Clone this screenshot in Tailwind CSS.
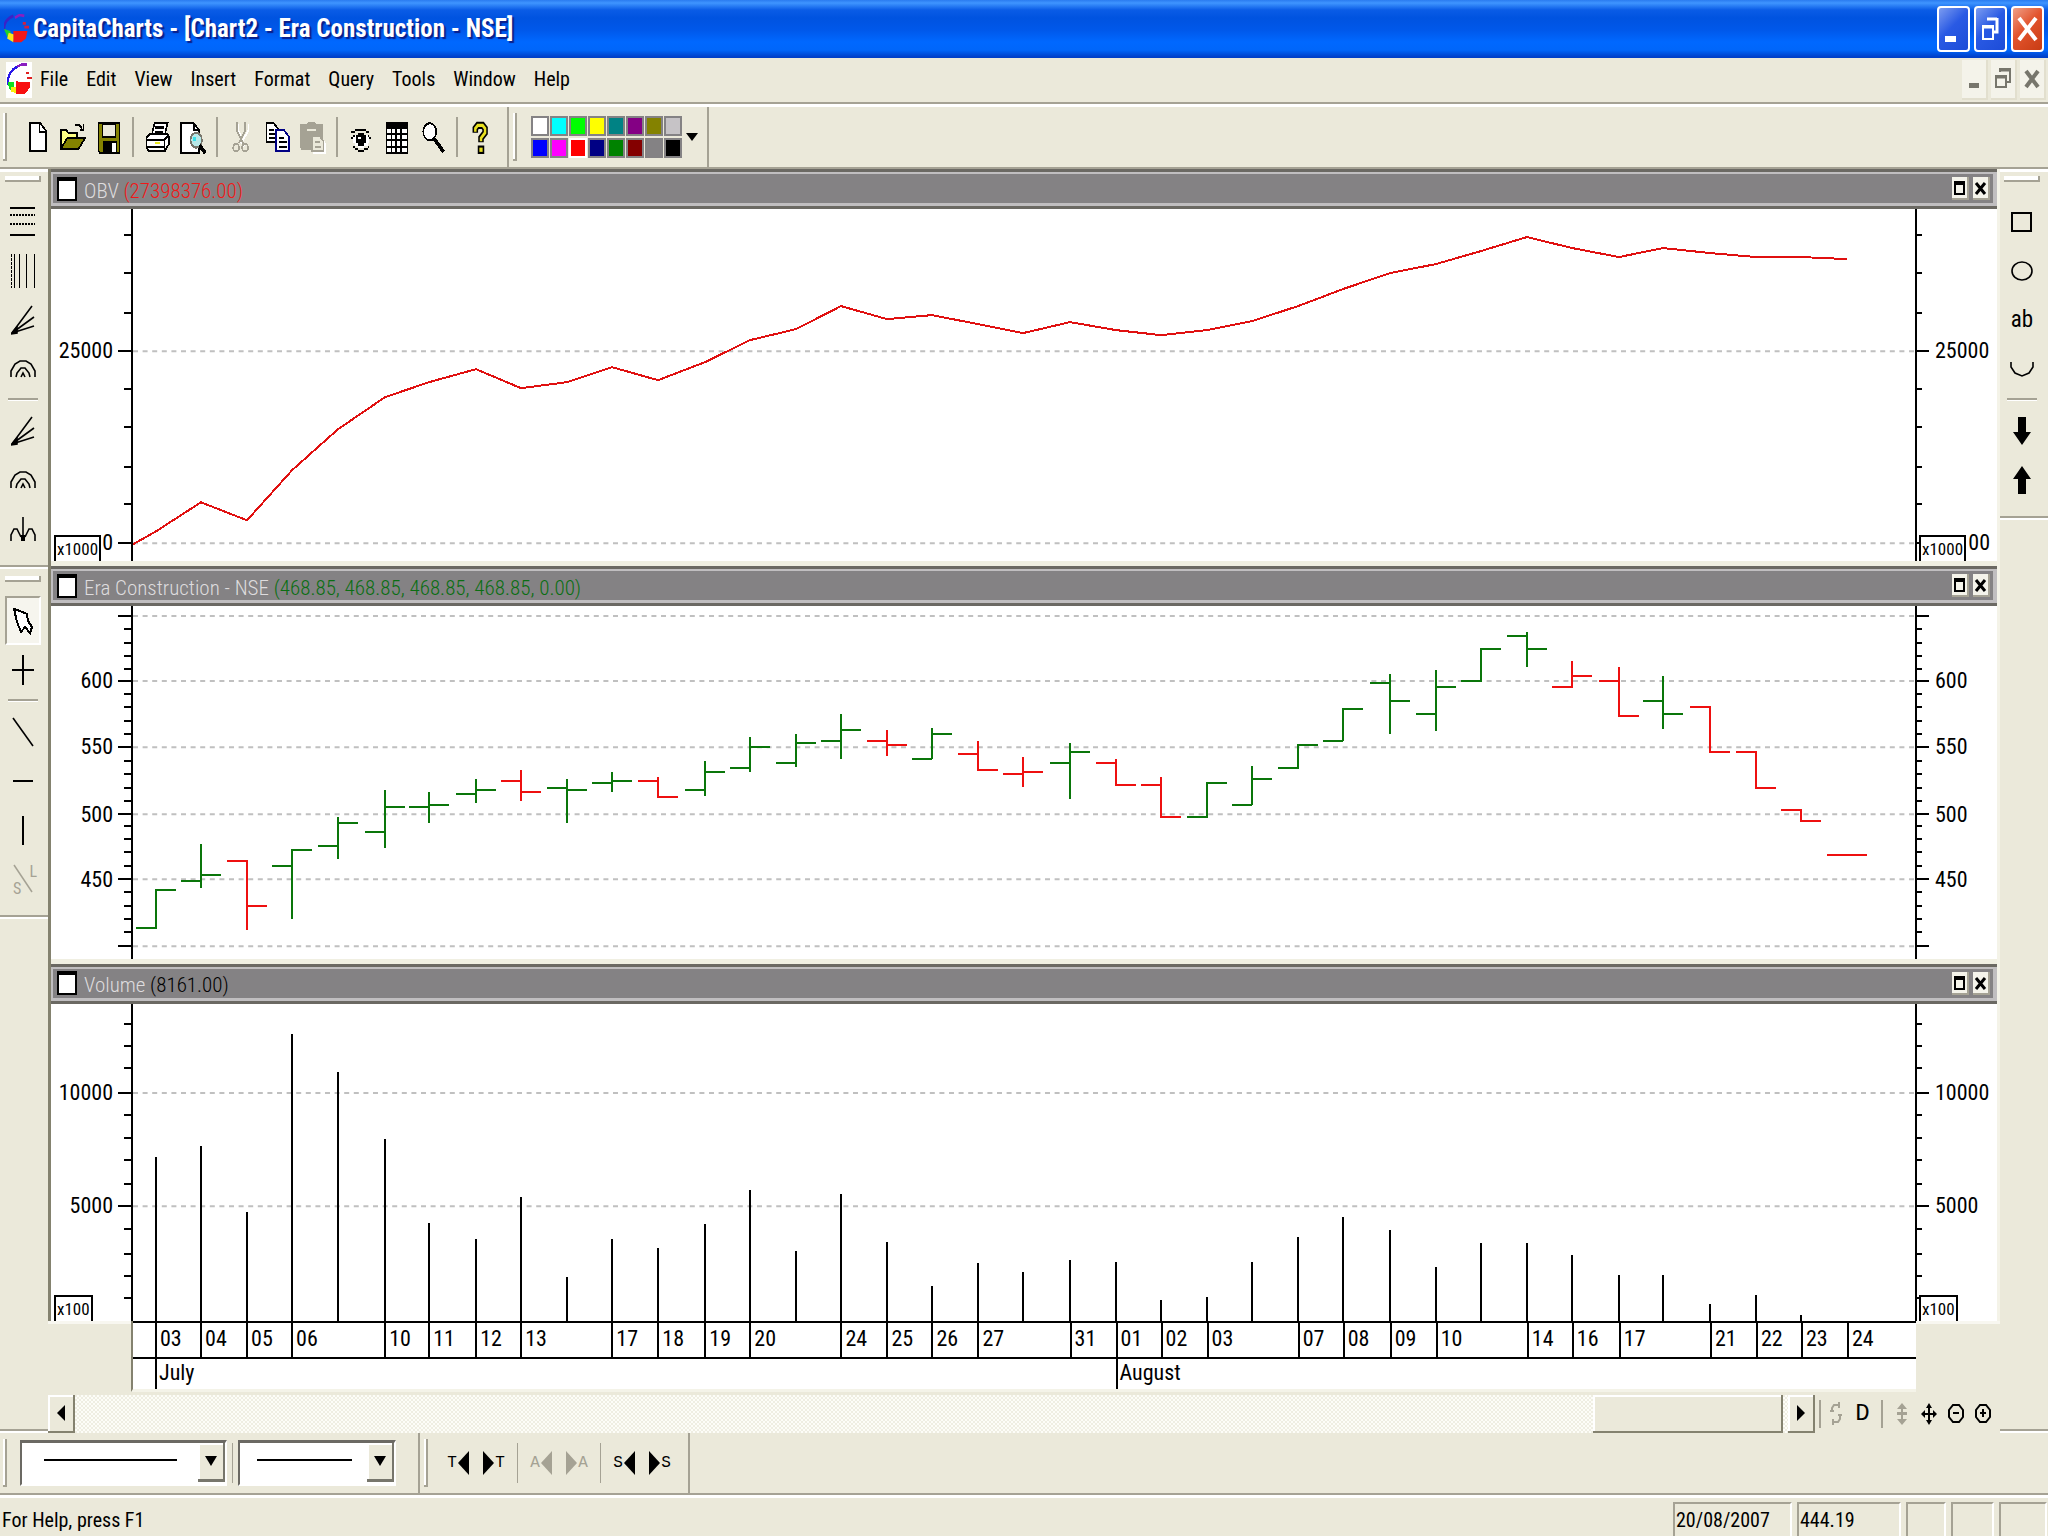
<!DOCTYPE html>
<html lang="en">
<head>
<meta charset="utf-8">
<title>CapitaCharts - [Chart2 - Era Construction - NSE]</title>
<script src="https://cdn.jsdelivr.net/npm/@tailwindcss/browser@4"></script>
</head>
<body class="flex min-h-screen flex-col overflow-x-hidden bg-[#ebe9da] font-['Roboto_Condensed','Roboto','Liberation_Sans',sans-serif] text-[20px] leading-6 text-black">

<!-- Title bar -->
<header class="flex h-[58px] shrink-0 items-center bg-[linear-gradient(to_bottom,#2a7bf0_0,#3f95ff_3px,#0a5ce6_10px,#0053e0_18px,#0058ea_30px,#0068ff_42px,#0066fa_50px,#003fc8_57px)] pr-1 pl-1">
  <svg class="h-[30px] w-[25px]" viewBox="0 0 16 16" preserveAspectRatio="none" aria-hidden="true"><path d="M0 8Q0 3 6 1" fill="none" stroke="#3a22c8" stroke-width="1.5"/><path d="M7 2L10 .5L13 1" fill="none" stroke="#8a1fc0" stroke-width="1.4"/><path d="M0 8L4 9L5 13L2 12Z" fill="#1fd02c"/><path d="M3 10L7 11L6 15L2 13Z" fill="#f5e81c"/><path d="M6 9L15 9L14 13L11 15L6 15Z" fill="#f01818"/><path d="M12 5H14M13 7H16" stroke="#d02040" stroke-width="1.4"/></svg>
  <h1 class="ml-1 flex-1 text-[25px] font-bold text-white [text-shadow:2px_2px_1px_#0a1e8a]">CapitaCharts - [Chart2 - Era Construction - NSE]</h1>
  <div class="flex gap-1">
    <button aria-label="Minimize" class="h-[46px] w-[33px] rounded-[4px] border-2 border-white bg-[linear-gradient(135deg,#7c9cf0,#2a5ae4_45%,#1c4cd8)]"><svg class="h-full w-full" viewBox="0 0 29 42"><path d="M6 28H17V34H6Z" fill="#fff"/></svg></button>
    <button aria-label="Restore" class="h-[46px] w-[33px] rounded-[4px] border-2 border-white bg-[linear-gradient(135deg,#7c9cf0,#2a5ae4_45%,#1c4cd8)]"><svg class="h-full w-full" viewBox="0 0 29 42" fill="none" stroke="#fff" stroke-width="2"><path d="M7 18H17V31H7Z"/><path d="M7 19H17M11 11H21M21 10V24H18" stroke-width="3"/></svg></button>
    <button aria-label="Close" class="h-[46px] w-[33px] rounded-[4px] border-2 border-white bg-[linear-gradient(135deg,#f0a088,#e2532c_45%,#c83c14)]"><svg class="h-full w-full" viewBox="0 0 29 42" fill="none" stroke="#fff" stroke-width="4"><path d="M6 10L23 32M23 10L6 32"/></svg></button>
  </div>
</header>

<!-- Menu bar -->
<div class="flex h-[49px] shrink-0 items-center border-b-[3px] border-white">
  <div class="flex h-full w-full items-center border-b-2 border-[#a5a294] pl-[6px]">
    <svg class="h-9 w-[26px] bg-white" viewBox="0 0 16 16" preserveAspectRatio="none" shape-rendering="crispEdges" aria-hidden="true"><path d="M1 10Q1 4 7 2" fill="none" stroke="#2a18e8" stroke-width="1.2"/><path d="M7 2L10 1H13" fill="none" stroke="#8a1fc0" stroke-width="1.2"/><path d="M1 9L5 9L5 13L2 12Z" fill="#10e020"/><path d="M3 11L7 11L6 14L3 13Z" fill="#f8ee10"/><path d="M6 8L8 9H15V11L12 14H6Z" fill="#f81010"/><path d="M12 5H14M13 7H16" stroke="#e02020"/></svg>
    <nav class="flex flex-1 gap-[18px] pb-[2px] pl-2">
      <button>File</button><button>Edit</button><button>View</button><button>Insert</button><button>Format</button><button>Query</button><button>Tools</button><button>Window</button><button>Help</button>
    </nav>
    <div class="flex gap-[3px] pr-[2px]">
      <button aria-label="Minimize chart" class="h-10 w-[26px] border-r-2 border-b-2 border-[#e2dfce] bg-[#f4f3ea]"><svg class="h-full w-full" viewBox="0 0 24 38"><path d="M7 23H17V28H7Z" fill="#77766c"/></svg></button>
      <button aria-label="Restore chart" class="h-10 w-[26px] border-r-2 border-b-2 border-[#e2dfce] bg-[#f4f3ea]"><svg class="h-full w-full" viewBox="0 0 24 38" fill="none" stroke="#77766c" stroke-width="2"><path d="M5 16H15V27H5ZM9 12V9H19V22H16"/><path d="M4 17H16M8 10H20" stroke-width="3"/></svg></button>
      <button aria-label="Close chart" class="h-10 w-[26px] border-r-2 border-b-2 border-[#e2dfce] bg-[#f4f3ea]"><svg class="h-full w-full" viewBox="0 0 24 38" fill="none" stroke="#77766c" stroke-width="4"><path d="M6 11L18 27M18 11L6 27"/></svg></button>
    </div>
  </div>
</div>

<!-- Standard toolbar -->
<div class="flex h-[62px] shrink-0 items-center border-b-2 border-[#a5a294]">
  <div class="flex h-full items-center border-r-2 border-[#a5a294] pr-2 pl-[3px]">
    <div class="mr-3 h-12 w-1 border-r-2 border-b-2 border-[#a5a294] bg-white"></div>
    <button aria-label="New" class="flex h-11 w-9 items-center justify-center"><svg class="h-[34px] w-[26px]" viewBox="0 0 16 16" preserveAspectRatio="none" shape-rendering="crispEdges"><path d="M3.5 1.5H10L13.5 5V14.5H3.5Z" fill="#fff" stroke="#000"/><path d="M9.5 1V5.5H14" fill="none" stroke="#000"/></svg></button>
    <button aria-label="Open" class="flex h-11 w-9 items-center justify-center"><svg class="h-[34px] w-[26px]" viewBox="0 0 16 16" preserveAspectRatio="none" shape-rendering="crispEdges"><path d="M.5 13V4.5H4L5 6H10.5V8" fill="#ffff84" stroke="#000"/><path d="M.5 13.5L4.5 8.5H15.5L11.5 13.5Z" fill="#848200" stroke="#000"/><path d="M9 2.5H12L13.5 4M14.5 2V5M12 4.5H15" fill="none" stroke="#000"/></svg></button>
    <button aria-label="Save" class="flex h-11 w-9 items-center justify-center"><svg class="h-[34px] w-[26px]" viewBox="0 0 16 16" preserveAspectRatio="none" shape-rendering="crispEdges"><path d="M1.5 1.5H14.5V15.5H2.5L1.5 14.5Z" fill="#848200" stroke="#000"/><path d="M4 2H12V8H4Z" fill="#ebe9da" stroke="#000"/><path d="M4 10H13V15H4Z"/><path d="M10 11H12V15H10Z" fill="#fff"/></svg></button>
    <div class="mx-[5px] h-10 w-[2px] bg-[#a5a294]"></div>
    <button aria-label="Print" class="flex h-11 w-9 items-center justify-center"><svg class="h-[34px] w-[26px]" viewBox="0 0 16 16" preserveAspectRatio="none" shape-rendering="crispEdges" fill="#fff" stroke="#000"><path d="M5 6.5L6.5 1.5H14.5L13 6.5"/><path d="M7 3.5H12M6.5 5.5H11.5"/><path d="M1.5 8.5L3.5 6.5H14.5L15.5 8V11L13 14.5H3L1.5 13Z"/><path d="M1 9.5H12.5L14.5 7.5M12.5 9.5V14M2 12.5H12"/><path d="M7 11H10" stroke="#e8e820"/></svg></button>
    <button aria-label="Print preview" class="flex h-11 w-9 items-center justify-center"><svg class="h-[34px] w-[26px]" viewBox="0 0 16 16" preserveAspectRatio="none" shape-rendering="crispEdges"><path d="M.5 1.5H8.5L11.5 4.5V15.5H.5Z" fill="#fff" stroke="#000"/><path d="M8.5 2V4.5H12" fill="none" stroke="#000"/><circle cx="10" cy="9.500" r="3.500" fill="#b8e8e8" stroke="#77766c"/><path d="M8 8H10V10H8Z" fill="#38e0e8"/><path d="M12 12L15.500 15.500" stroke="#000" stroke-width="2"/></svg></button>
    <div class="mx-[5px] h-10 w-[2px] bg-[#a5a294]"></div>
    <button aria-label="Cut" disabled class="flex h-11 w-9 items-center justify-center"><svg class="h-[34px] w-[26px]" viewBox="0 0 16 16" preserveAspectRatio="none" shape-rendering="crispEdges" fill="none"><path d="M6.5 2V5L8.500 9L10 12.500M12.500 2V5L9.500 9L8 11" stroke="#fff"/><path d="M5.500 1V5L8 9L9.500 11M10.500 1V5L8 9L6.500 11" stroke="#a5a294"/><circle cx="5" cy="13" r="1.800" stroke="#a5a294"/><circle cx="10.500" cy="13" r="1.800" stroke="#a5a294"/></svg></button>
    <button aria-label="Copy" class="flex h-11 w-9 items-center justify-center"><svg class="h-[34px] w-[26px]" viewBox="0 0 16 16" preserveAspectRatio="none" shape-rendering="crispEdges" fill="#fff"><path d="M1.500 1.500H6L8.500 4V10.500H1.500Z" stroke="#000"/><path d="M3 4.500H6M3 6.500H7M3 8.500H7" stroke="#000"/><path d="M7.500 4.500H12L15.500 8V14.500H7.500Z" stroke="#000084"/><path d="M9 8.500H12M9 10.500H14M9 12.500H14" stroke="#000"/></svg></button>
    <button aria-label="Paste" disabled class="flex h-11 w-9 items-center justify-center"><svg class="h-[34px] w-[26px]" viewBox="0 0 16 16" preserveAspectRatio="none" shape-rendering="crispEdges"><path d="M0 2H4L5 1H9L10 2H14V14H1L0 13Z" fill="#a5a294"/><path d="M4 4H10V5H4Z" fill="#ebe9da"/><path d="M8 8H13L16 11V16H8Z" fill="#fff"/><path d="M7.500 7.500H12L14.500 10V14.500H7.500Z" fill="#ebe9da" stroke="#a5a294"/><path d="M9 10.500H12M9 12.500H13" stroke="#a5a294"/></svg></button>
    <div class="mx-[5px] h-10 w-[2px] bg-[#a5a294]"></div>
    <button aria-label="Watch" class="flex h-11 w-9 items-center justify-center"><svg class="h-[34px] w-[26px]" viewBox="0 0 16 16" preserveAspectRatio="none" shape-rendering="crispEdges"><path d="M4 4H11V5H13V6H11V5H4V6H2V5H4ZM2 8H3V9H2ZM3 7H4V8H3ZM12 7H13V8H12ZM13 8H14V9H13ZM3 12H4V13H3ZM4 13H6V14H4ZM6 14H10V15H6ZM10 13H12V14H10ZM12 12H13V13H12Z"/><path d="M4 7H12V8H13V11H12V12H10V13H6V12H4V11H3V8H4Z" fill="#fff"/><path d="M6 6H10V7H11V11H10V12H6V11H5V7H6Z"/><path d="M6 8H8V9H6Z" fill="#fff"/></svg></button>
    <button aria-label="Data grid" class="flex h-11 w-9 items-center justify-center"><svg class="h-[34px] w-[26px]" viewBox="0 0 16 16" preserveAspectRatio="none" shape-rendering="crispEdges"><path d="M1 1H15V16H1Z"/><path d="M2 4H4V6H2ZM5 4H7V6H5ZM8 4H10V6H8ZM11 4H14V6H11ZM2 7H4V9H2ZM5 7H7V9H5ZM8 7H10V9H8ZM11 7H14V9H11ZM2 10H4V12H2ZM5 10H7V12H5ZM8 10H10V12H8ZM11 10H14V12H11ZM2 13H4V15H2ZM5 13H7V15H5ZM8 13H10V15H8ZM11 13H14V15H11Z" fill="#fff"/></svg></button>
    <button aria-label="Zoom" class="flex h-11 w-9 items-center justify-center"><svg class="h-[34px] w-[26px]" viewBox="0 0 16 16" preserveAspectRatio="none" shape-rendering="crispEdges"><circle cx="6" cy="5.500" r="4" fill="#fff" stroke="#000"/><path d="M9 9L14.500 15" stroke="#000" stroke-width="2"/></svg></button>
    <div class="mx-[5px] h-10 w-[2px] bg-[#a5a294]"></div>
    <button aria-label="Help" class="flex h-11 w-9 items-center justify-center"><svg class="h-[34px] w-[26px]" viewBox="0 0 16 16" preserveAspectRatio="none" fill="none"><path d="M4.500 6V4L6 2.500H9L10.500 4V6L8 8.500V10.500" stroke="#000" stroke-width="3.400"/><path d="M6 12H10V16H6Z" fill="#000"/><path d="M4.500 5.500V4L6 2.500H9L10.500 4V6L8 8.500V10" stroke="#e8e020" stroke-width="1.500"/><path d="M7 13H9V15H7Z" fill="#e8e020"/></svg></button>
  </div>
  <div class="flex h-full items-center border-r-2 border-[#a5a294] pr-[9px] pl-1">
    <div class="mr-[14px] h-12 w-1 border-r-2 border-b-2 border-[#a5a294] bg-white"></div>
    <div class="grid grid-cols-8 gap-x-px gap-y-[2px]">
      <button aria-label="White" class="h-5 w-[18px] border-2 border-[#848284] bg-white"></button>
      <button aria-label="Cyan" class="h-5 w-[18px] border-2 border-[#848284] bg-[#00ffff]"></button>
      <button aria-label="Lime" class="h-5 w-[18px] border-2 border-[#848284] bg-[#00ff00]"></button>
      <button aria-label="Yellow" class="h-5 w-[18px] border-2 border-[#848284] bg-[#ffff00]"></button>
      <button aria-label="Teal" class="h-5 w-[18px] border-2 border-[#848284] bg-[#008284]"></button>
      <button aria-label="Purple" class="h-5 w-[18px] border-2 border-[#848284] bg-[#840084]"></button>
      <button aria-label="Olive" class="h-5 w-[18px] border-2 border-[#848284] bg-[#848200]"></button>
      <button aria-label="Silver" class="h-5 w-[18px] border-2 border-[#848284] bg-[#c6c3c6]"></button>
      <button aria-label="Blue" class="h-5 w-[18px] border-2 border-[#848284] bg-[#0000ff]"></button>
      <button aria-label="Magenta" class="h-5 w-[18px] border-2 border-[#848284] bg-[#ff00ff]"></button>
      <button aria-label="Red" aria-pressed="true" class="h-5 w-[18px] border-2 border-white bg-[#ff0000]"></button>
      <button aria-label="Navy" class="h-5 w-[18px] border-2 border-[#848284] bg-[#000084]"></button>
      <button aria-label="Green" class="h-5 w-[18px] border-2 border-[#848284] bg-[#008200]"></button>
      <button aria-label="Maroon" class="h-5 w-[18px] border-2 border-[#848284] bg-[#840000]"></button>
      <button aria-label="Gray" class="h-5 w-[18px] border-2 border-[#848284] bg-[#848284]"></button>
      <button aria-label="Black" class="h-5 w-[18px] border-2 border-[#848284] bg-black"></button>
    </div>
    <button aria-label="More colours" class="ml-1"><svg class="h-2 w-3" viewBox="0 0 12 8"><path d="M0 0H12L6 8Z"/></svg></button>
  </div>
</div>

<main class="flex flex-1">
  <!-- Left drawing tools -->
  <aside class="flex w-12 shrink-0 flex-col border-b-2 border-white">
    <div class="border-t-[3px] border-b-2 border-t-white border-b-white">
      <div class="flex flex-col items-center border-b-2 border-[#a5a294] pt-1 pr-[2px] pb-3">
        <div class="mb-[15px] h-[6px] w-9 border-r-2 border-b-2 border-[#a5a294] bg-white"></div>
        <button aria-label="Horizontal levels" class="flex h-[49px] w-9 items-center justify-center"><svg class="h-8 w-[26px]" viewBox="0 0 26 32" shape-rendering="crispEdges" fill="none" stroke="#000" stroke-width="2"><path d="M0 2H25M0 29H25"/><path d="M0 9H25M0 18H25" stroke-dasharray="2 1"/></svg></button>
        <button aria-label="Vertical levels" class="flex h-[49px] w-9 items-center justify-center"><svg class="h-[34px] w-[26px]" viewBox="0 0 26 34" shape-rendering="crispEdges" fill="none" stroke="#000"><path d="M1.500 0V34" stroke-width="1" stroke-dasharray="3 1"/><path d="M4.500 0V34M9.500 0V34M16.500 0V34M24.500 0V34"/></svg></button>
        <button aria-label="Fan lines" class="flex h-[49px] w-9 items-center justify-center"><svg class="h-[30px] w-6" viewBox="0 0 24 30" fill="none" stroke="#000" stroke-width="1.600"><path d="M1 28L21 1M1 28L23 12M1 28L23 21"/><path d="M0 29L6 22V28Z" fill="#000"/></svg></button>
        <button aria-label="Arcs" class="flex h-[49px] w-9 items-center justify-center"><svg class="h-5 w-[26px]" viewBox="0 0 26 20" fill="none" stroke="#000" stroke-width="1.600"><path d="M1 18V12L5 5L10 2H16L21 5L25 12V18M6 18L7 14L11 9H15L19 14L20 18"/><path d="M11 18L13 14L15 18"/></svg></button>
        <div class="my-[5px] h-[3px] w-[30px] border-b border-white bg-[#a5a294]"></div>
        <button aria-label="Gann fan" class="flex h-[49px] w-9 items-center justify-center"><svg class="h-[30px] w-6" viewBox="0 0 24 30" fill="none" stroke="#000" stroke-width="1.600"><path d="M1 28L21 1M1 28L23 12M1 28L23 21"/><path d="M0 29L6 22V28Z" fill="#000"/></svg></button>
        <button aria-label="Speed arcs" class="flex h-[49px] w-9 items-center justify-center"><svg class="h-5 w-[26px]" viewBox="0 0 26 20" fill="none" stroke="#000" stroke-width="1.600"><path d="M1 18V12L5 5L10 2H16L21 5L25 12V18M6 18L7 14L11 9H15L19 14L20 18"/><path d="M11 18L13 14L15 18"/></svg></button>
        <button aria-label="Cycles" class="flex h-[49px] w-9 items-center justify-center"><svg class="h-6 w-[26px]" viewBox="0 0 26 24" fill="none" stroke="#000" stroke-width="1.600"><path d="M13 0V24M1 24V18L4 12H7L9 16L11 20M15 20L17 16L19 12H22L25 18V24"/><path d="M11 18H15V24H11Z" fill="#000" stroke="none"/></svg></button>
      </div>
    </div>
    <div class="border-b-2 border-white">
      <div class="flex flex-col items-center border-b-2 border-[#a5a294] pt-[7px] pr-[2px] pb-3">
        <div class="mb-[14px] h-[6px] w-9 border-r-2 border-b-2 border-[#a5a294] bg-white"></div>
        <button aria-label="Select" aria-pressed="true" class="flex h-[49px] w-9 items-center justify-center border-2 border-t-[#a5a294] border-r-white border-b-white border-l-[#a5a294] bg-[#f6f5ee]"><svg class="h-[30px] w-6" viewBox="0 0 24 30" shape-rendering="crispEdges"><path d="M3 3L9 5L16 8L17 15L21 21L19 27L14 21L10 26L6 16Z" fill="#fff" stroke="#000" stroke-width="2"/></svg></button>
        <button aria-label="Crosshair" class="flex h-[49px] w-9 items-center justify-center"><svg class="h-[30px] w-[22px]" viewBox="0 0 22 30" shape-rendering="crispEdges" stroke="#000" stroke-width="2"><path d="M11 0V30M0 15H22"/></svg></button>
        <div class="my-[5px] h-[3px] w-[30px] border-b border-white bg-[#a5a294]"></div>
        <button aria-label="Trend line" class="flex h-[49px] w-9 items-center justify-center"><svg class="h-[30px] w-[22px]" viewBox="0 0 22 30" stroke="#000" stroke-width="1.600"><path d="M1 1L21 29"/></svg></button>
        <button aria-label="Horizontal line" class="flex h-[49px] w-9 items-center justify-center"><svg class="h-[30px] w-[22px]" viewBox="0 0 22 30" shape-rendering="crispEdges" stroke="#000" stroke-width="2"><path d="M1 15H21"/></svg></button>
        <button aria-label="Vertical line" class="flex h-[49px] w-9 items-center justify-center"><svg class="h-[30px] w-[22px]" viewBox="0 0 22 30" shape-rendering="crispEdges" stroke="#000" stroke-width="2"><path d="M11 1V30"/></svg></button>
        <button aria-label="Stop loss" disabled class="relative flex h-[49px] w-9 items-center justify-center text-[#a5a294]"><svg class="h-[30px] w-[22px]" viewBox="0 0 22 30" stroke="#a5a294" stroke-width="1.500"><path d="M2 1L20 28"/></svg><span class="absolute top-2 right-1 text-[16px] leading-5">L</span><span class="absolute bottom-1 left-2 text-[16px] leading-5">S</span></button>
      </div>
    </div>
    <div class="flex-1 border-b-2 border-[#a5a294]"></div>
  </aside>

  <!-- Chart area -->
  <section class="flex min-w-0 flex-1 flex-col">
    <div id="panels" class="flex flex-1 flex-col border-r-[3px] border-l-[3px] border-r-[#f4f3e8] border-l-[#84826f]"></div>
    <div class="flex">
      <div class="w-[83px] shrink-0 border-t-[3px] border-[#f8f7f0]"></div>
      <div class="min-w-0 flex-1 border-b-[3px] border-l-2 border-b-[#f4f3e8] border-l-[#84826f] bg-white">
        <div id="days" class="relative h-[38px] border-y-2 border-black"></div>
        <div id="months" class="relative h-[30px]"></div>
      </div>
      <div class="w-[84px] shrink-0 border-t-[3px] border-[#f8f7f0]"></div>
    </div>
    <!-- Scroll bar and zoom tools -->
    <div class="mt-[3px] flex h-[38px] items-center pr-1">
      <button aria-label="Scroll left" class="flex h-full w-[27px] items-center justify-center border-r-2 border-b-2 border-[#84826f] shadow-[inset_2px_2px_0_#fff]"><svg class="h-4 w-2" viewBox="0 0 8 16"><path d="M8 0V16L0 8Z"/></svg></button>
      <div class="flex h-full flex-1 justify-end bg-[repeating-conic-gradient(#fdfdf8_0_25%,#efeee2_0_50%)] bg-[size:4px_4px] pr-[5px]">
        <div class="h-full w-[190px] border-r-2 border-b-2 border-[#84826f] bg-[#ebe9da] shadow-[inset_2px_2px_0_#fff]"></div>
      </div>
      <button aria-label="Scroll right" class="flex h-full w-[27px] items-center justify-center border-r-2 border-b-2 border-[#84826f] shadow-[inset_2px_2px_0_#fff]"><svg class="h-4 w-2" viewBox="0 0 8 16"><path d="M0 0V16L8 8Z"/></svg></button>
      <div class="mr-px ml-1 h-7 w-[2px] bg-[#a5a294]"></div>
      <button aria-label="Refresh" disabled class="flex h-8 w-[27px] items-center justify-center"><svg class="h-6 w-3" viewBox="0 0 12 24" fill="none" stroke="#a5a294" stroke-width="2"><path d="M8 3H4L2 6V10M9 0V6M0 9H4M4 20H8L10 17V13M3 17V23M8 13H12"/></svg></button>
      <button class="h-8 w-[27px] font-['Liberation_Mono',monospace] text-[24px] leading-8">D</button>
      <div class="mx-[5px] h-7 w-[2px] bg-[#a5a294]"></div>
      <button aria-label="Fit vertically" disabled class="flex h-8 w-[27px] items-center justify-center"><svg class="h-[22px] w-3" viewBox="0 0 12 22" fill="#a5a294"><path d="M6 0L11 6H7V9H11V12H7V16H11L6 22L1 16H5V12H1V9H5V6H1Z"/></svg></button>
      <button aria-label="Move" class="flex h-8 w-[27px] items-center justify-center"><svg class="h-[22px] w-4" viewBox="0 0 16 22"><path d="M8 0L11 5H9V10H12V7L16 11L12 15V12H9V17H11L8 22L5 17H7V12H4V15L0 11L4 7V10H7V5H5Z"/></svg></button>
      <button aria-label="Zoom out" class="flex h-8 w-[27px] items-center justify-center"><svg class="h-[22px] w-4" viewBox="0 0 16 22" fill="none" stroke="#000" stroke-width="2"><path d="M5 2H11L15 7V14L11 19H5L1 14V7ZM5 10H11"/></svg></button>
      <button aria-label="Zoom in" class="flex h-8 w-[27px] items-center justify-center"><svg class="h-[22px] w-4" viewBox="0 0 16 22" fill="none" stroke="#000" stroke-width="2"><path d="M5 2H11L15 7V14L11 19H5L1 14V7ZM5 10H11M8 6V14"/></svg></button>
    </div>
  </section>

  <!-- Right shape tools -->
  <aside class="flex w-12 shrink-0 flex-col border-b-2 border-white">
    <div class="border-t-[3px] border-b-2 border-white">
      <div class="flex flex-col items-center border-b-2 border-[#a5a294] pt-1 pr-1 pb-3">
        <div class="mb-[15px] h-[6px] w-9 border-r-2 border-b-2 border-[#a5a294] bg-white"></div>
        <button aria-label="Rectangle" class="flex h-[49px] w-9 items-center justify-center"><svg class="h-5 w-[22px]" viewBox="0 0 22 20" fill="none" stroke="#000" stroke-width="2"><path d="M1 1H20V19H1Z"/></svg></button>
        <button aria-label="Ellipse" class="flex h-[49px] w-9 items-center justify-center"><svg class="h-5 w-6" viewBox="0 0 24 20" fill="none" stroke="#000" stroke-width="1.600"><ellipse cx="12" cy="10" rx="10" ry="9"/></svg></button>
        <button class="h-[49px] w-9 text-[23px]">ab</button>
        <button aria-label="Arc" class="flex h-[49px] w-9 items-end justify-center pb-4"><svg class="h-4 w-6" viewBox="0 0 24 16" fill="none" stroke="#000" stroke-width="1.600"><path d="M1 1V6L5 12L12 15L19 12L23 6V1"/></svg></button>
        <div class="my-[5px] h-[3px] w-[30px] border-b border-white bg-[#a5a294]"></div>
        <button aria-label="Down arrow" class="flex h-[49px] w-9 items-center justify-center"><svg class="h-7 w-[18px]" viewBox="0 0 18 28"><path d="M5 0H13V15H18L9 28L0 15H5Z"/></svg></button>
        <button aria-label="Up arrow" class="flex h-[49px] w-9 items-center justify-center"><svg class="h-7 w-[18px]" viewBox="0 0 18 28"><path d="M5 28H13V13H18L9 0L0 13H5Z"/></svg></button>
      </div>
    </div>
    <div class="flex-1 border-b-2 border-[#a5a294]"></div>
  </aside>
</main>

<!-- Line style and scroll toolbar -->
<div class="flex h-[62px] shrink-0 items-center border-b-2 border-[#a5a294]">
  <div class="flex h-full items-center border-r-2 border-[#a5a294] pr-[22px] pl-[3px]">
    <div class="mr-[13px] h-12 w-1 border-r-2 border-b-2 border-[#a5a294] bg-white"></div>
    <div class="relative h-[46px] w-[207px] border-2 border-t-[3px] border-t-[#6b6963] border-r-white border-b-white border-l-[#6b6963] bg-white">
      <select aria-label="Line style" class="h-full w-full appearance-none bg-white"><option>&nbsp;</option></select>
      <div class="pointer-events-none absolute top-4 right-12 left-[22px] h-[2px] bg-black"></div>
      <div class="pointer-events-none absolute top-0 right-0 bottom-[2px] flex w-[27px] items-center justify-center border-r-2 border-b-[3px] border-[#77766c] bg-[#ebe9da] shadow-[inset_2px_2px_0_#fff]"><svg class="h-[10px] w-3" viewBox="0 0 12 10"><path d="M0 0H12L6 10Z"/></svg></div>
    </div>
    <div class="mx-[5px] h-10 w-px bg-[#a5a294]"></div>
    <div class="relative h-[46px] w-[158px] border-2 border-t-[3px] border-t-[#6b6963] border-r-white border-b-white border-l-[#6b6963] bg-white">
      <select aria-label="Line width" class="h-full w-full appearance-none bg-white"><option>&nbsp;</option></select>
      <div class="pointer-events-none absolute top-4 right-[42px] left-[17px] h-[2px] bg-black"></div>
      <div class="pointer-events-none absolute top-0 right-0 bottom-[2px] flex w-[27px] items-center justify-center border-r-2 border-b-[3px] border-[#77766c] bg-[#ebe9da] shadow-[inset_2px_2px_0_#fff]"><svg class="h-[10px] w-3" viewBox="0 0 12 10"><path d="M0 0H12L6 10Z"/></svg></div>
    </div>
  </div>
  <div class="flex h-full items-center border-r-2 border-[#a5a294] pr-[10px] pl-1 font-['Liberation_Mono',monospace] text-[16px]">
    <div class="mr-3 h-12 w-1 border-r-2 border-b-2 border-[#a5a294] bg-white"></div>
    <button class="flex h-11 w-9 items-center justify-center gap-px">T<svg class="h-6 w-[11px]" viewBox="0 0 11 24" fill="currentColor"><path d="M11 0V24L0 12Z"/></svg></button>
    <button class="flex h-11 w-9 items-center justify-center gap-px"><svg class="h-6 w-[11px]" viewBox="0 0 11 24" fill="currentColor"><path d="M0 0V24L11 12Z"/></svg>T</button>
    <div class="mx-[5px] h-10 w-px bg-[#a5a294]"></div>
    <button disabled class="flex h-11 w-9 items-center justify-center gap-px text-[#a5a294]">A<svg class="h-6 w-[11px]" viewBox="0 0 11 24" fill="currentColor"><path d="M11 0V24L0 12Z"/></svg></button>
    <button disabled class="flex h-11 w-9 items-center justify-center gap-px text-[#a5a294]"><svg class="h-6 w-[11px]" viewBox="0 0 11 24" fill="currentColor"><path d="M0 0V24L11 12Z"/></svg>A</button>
    <div class="mx-[5px] h-10 w-px bg-[#a5a294]"></div>
    <button class="flex h-11 w-9 items-center justify-center gap-px">S<svg class="h-6 w-[11px]" viewBox="0 0 11 24" fill="currentColor"><path d="M11 0V24L0 12Z"/></svg></button>
    <button class="flex h-11 w-9 items-center justify-center gap-px"><svg class="h-6 w-[11px]" viewBox="0 0 11 24" fill="currentColor"><path d="M0 0V24L11 12Z"/></svg>S</button>
  </div>
</div>

<!-- Status bar -->
<footer class="flex h-[41px] shrink-0 gap-[5px] border-t-[3px] border-white pt-1 pr-px pl-[2px] leading-9">
  <p class="flex-1">For Help, press F1</p>
  <p class="w-[119px] border-t-2 border-r-2 border-l-2 border-t-[#a5a294] border-r-white border-l-[#a5a294] pl-px leading-8">20/08/2007</p>
  <p class="w-[104px] border-t-2 border-r-2 border-l-2 border-t-[#a5a294] border-r-white border-l-[#a5a294] pl-px leading-8">444.19</p>
  <p class="w-10 border-t-2 border-r-2 border-l-2 border-t-[#a5a294] border-r-white border-l-[#a5a294]"></p>
  <p class="w-[43px] border-t-2 border-r-2 border-l-2 border-t-[#a5a294] border-r-white border-l-[#a5a294]"></p>
  <p class="w-12 border-t-2 border-r-2 border-l-2 border-t-[#a5a294] border-r-white border-l-[#a5a294]"></p>
</footer>

<script>
// Drawing space shared by the three panels: x runs from X0 over W units.
const X0 = 133, W = 1782;
const xs = [156,201,247,292,338,385,429,476,521,567,612,658,705,750,796,841,887,932,978,1023,1070,1116,1161,1207,1252,1298,1343,1390,1436,1481,1527,1572,1619,1663,1710,1756,1801,1847];
const days = ['03','04','05','06','','10','11','12','13','','17','18','19','20','','24','25','26','27','','31','01','02','03','','07','08','09','10','','14','16','17','','21','22','23','24'];
const obv = [531,502,520,470,429,397,382,369,388,382,367,380,362,340,329,306,319,315,324,333,322,330,335,330,321,306,289,273,264,251,237,248,257,248,253,257,257,259];
// [high, low, open, close, falling]
const ohlc = [[890,928,928,890],[845,887,881,875],[861,929,861,906,1],[850,918,866,850],[818,858,846,823],[791,847,832,807],[793,822,807,805],[780,802,794,790],[771,800,781,792,1],[780,822,788,790],[773,791,783,781],[778,797,781,797,1],[762,795,790,772],[738,771,768,747],[735,766,763,743],[715,758,741,730],[731,755,741,745,1],[729,758,759,734],[742,770,754,770,1],[758,786,774,772,1],[744,798,763,752],[760,785,763,785,1],[778,817,785,817,1],[783,817,817,783],[767,804,805,779],[745,768,768,745],[709,740,741,709],[675,733,683,701],[671,730,714,687],[649,681,681,649],[633,666,636,649],[662,687,687,676,1],[668,716,681,716,1],[677,728,701,714],[707,752,707,752,1],[752,788,752,788,1],[810,821,810,821,1],[855,855,855,855,1]];
const vol = [1157,1146,1212,1034,1072,1139,1223,1239,1197,1277,1239,1248,1224,1190,1251,1194,1242,1286,1263,1272,1260,1262,1300,1297,1262,1237,1217,1230,1267,1243,1243,1255,1275,1275,1304,1295,1315];
const line = (d, color, w) => `<path d="${d}" fill="none" stroke="${color}" stroke-width="${w || 2}" vector-effect="non-scaling-stroke" shape-rendering="crispEdges"/>`;

// left / right: axis labels keyed by their y
const panels = [
  { name: 'OBV', value: '(27398376.00)', grow: 352, y0: 209, gap: 5, color: 'text-[#f01818]', unit: 'x1000',
    major: [351, 543], left: { 351: '25000', 543: '0' }, right: { 351: '25000' }, tail: { 543: '00' }, minor: [235,273,313,389,427,467,504],
    draw: () => line('M133 544L' + xs.map((x, i) => x + ' ' + obv[i]).join('L'), '#e01010') },
  { name: 'Era Construction - NSE', value: '(468.85, 468.85, 468.85, 468.85, 0.00)', grow: 352, y0: 606, gap: 5, color: 'text-[#0a6e12]', unit: '',
    major: [616, 681, 747, 814, 879, 946], left: { 681: '600', 747: '550', 814: '500', 879: '450' }, right: { 681: '600', 747: '550', 814: '500', 879: '450' }, tail: {},
    minor: [629,643,656,669,694,707,721,734,761,774,788,801,826,839,852,866,892,906,919,932],
    draw: () => ohlc.map(([h, l, o, c, f], i) => line(`M${xs[i]} ${h - 1}V${l + 1}M${xs[i] - 20} ${o}H${xs[i]}M${xs[i]} ${c}H${xs[i] + 20}`, f ? '#ee1010' : '#0a760a')).join('') },
  { name: 'Volume', value: '(8161.00)', grow: 317, y0: 1004, gap: 0, color: 'text-black', unit: 'x100',
    major: [1093, 1206], left: { 1093: '10000', 1206: '5000' }, right: { 1093: '10000', 1206: '5000' }, tail: {}, minor: [1024,1046,1068,1115,1138,1160,1184,1229,1254,1276,1298],
    draw: () => line(vol.map((y, i) => `M${xs[i]} ${y}V1321`).join(''), '#000') }
];

document.getElementById('panels').innerHTML = panels.map(p => {
  const box = (x, w) => `viewBox="${x} ${p.y0} ${w} ${p.grow}" preserveAspectRatio="none"`;
  const ticks = (a, b, c) => line(p.major.map(y => `M${a} ${y}H${b}`).join('') + p.minor.map(y => `M${a} ${y}H${c}`).join(''), '#000', 2);
  const labels = (set, cls) => Object.entries(set).map(([y, t]) => `<span class="absolute ${cls} -translate-y-1/2 text-[22px] leading-6" style="top:${(y - p.y0) / p.grow * 100}%">${t}</span>`).join('');
  const unit = cls => p.unit ? `<span class="absolute bottom-0 ${cls} border-2 border-b-0 border-black bg-white px-px text-[17px] leading-6">${p.unit}</span>` : '';
  return `<article class="flex flex-col" style="flex:${p.grow} 1 ${40 + p.gap}px">
    <header class="flex h-10 shrink-0 items-center border-t-[3px] border-b-[3px] border-[#6b6963] bg-[#a5a29c]">
      <div class="flex h-full w-full items-center border-2 border-r-4 border-b-[3px] border-[#c0bec0] bg-[#848284] pr-[3px] pl-1">
        <input type="checkbox" aria-label="Select ${p.name}" class="h-6 w-5 appearance-none border-2 border-t-4 border-black bg-white">
        <h2 class="ml-[7px] flex-1 pt-1 text-[21px] font-light text-[#dedcde]">${p.name} <span class="${p.color}">${p.value}</span></h2>
        <button aria-label="Maximize ${p.name}" class="mr-1 h-[23px] w-[17px] border-r-2 border-b-2 border-[#a5a294] bg-[#f4f3ea]"><svg class="h-full w-full" viewBox="0 0 15 21" fill="none" stroke="#000" stroke-width="2"><path d="M3 5H12V17H3Z"/><path d="M2 6H13" stroke-width="4"/></svg></button>
        <button aria-label="Close ${p.name}" class="h-[23px] w-[17px] border-r-2 border-b-2 border-[#a5a294] bg-[#f4f3ea]"><svg class="h-full w-full" viewBox="0 0 15 21" fill="none" stroke="#000" stroke-width="3"><path d="M3 6L12 17M12 6L3 17"/></svg></button>
      </div>
    </header>
    <div class="flex flex-1 bg-white">
      <div class="relative w-20 shrink-0"><svg class="absolute inset-0 h-full w-full" ${box(0, 80)}>${ticks(80, 67, 73)}</svg>${labels(p.left, 'right-[18px]')}${unit('left-[3px]')}</div>
      <div class="relative min-w-0 flex-1 border-x-2 border-black"><svg class="absolute inset-0 h-full w-full" ${box(X0, W)}>
        ${p.major.map(y => `<path d="M133 ${y}H1915" stroke="#c0c0c0" stroke-width="2" stroke-dasharray="5 4.600" vector-effect="non-scaling-stroke"/>`).join('')}${p.draw()}</svg></div>
      <div class="relative w-20 shrink-0"><svg class="absolute inset-0 h-full w-full" ${box(0, 80)}>${ticks(0, 12, 5)}</svg>${labels(p.right, 'left-[18px]')}${labels(p.tail, 'right-[7px]')}${unit('left-[2px]')}</div>
    </div>
    ${p.gap ? '<div class="h-[5px] shrink-0 bg-[#f0efe2]"></div>' : ''}
  </article>`;
}).join('');

const pct = x => ((x - 1 - X0) / W * 100) + '%';
document.getElementById('days').innerHTML = days.map((d, i) => d && `<span class="absolute inset-y-0 border-l-2 border-black pl-[3px] text-[22px] leading-8" style="left:${pct(xs[i])}">${d}</span>`).join('');
document.getElementById('months').innerHTML = [['July', 156], ['August', 1116]].map(([m, x]) => `<span class="absolute inset-y-0 border-l-2 border-black pl-[2px] text-[22px] leading-7" style="left:${pct(x)}">${m}</span>`).join('');
</script>
</body>
</html>
